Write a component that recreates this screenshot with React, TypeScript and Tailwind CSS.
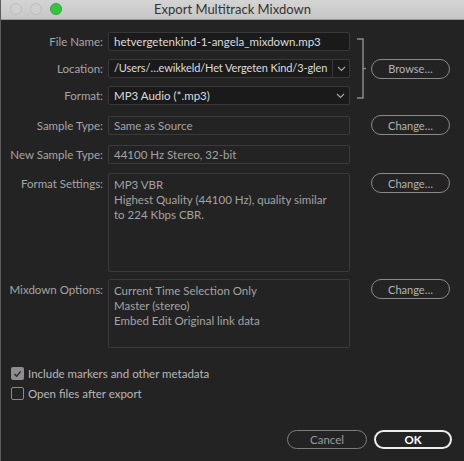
import React from 'react';

const font = { fontFamily: 'Lato, "Noto Sans", sans-serif' };

function Chevron() {
  return (
    <svg width="9" height="6" viewBox="0 0 9 6" className="shrink-0">
      <path d="M1 1 L4.5 4.5 L8 1" fill="none" stroke="#a8a8a8" strokeWidth="1.1" />
    </svg>
  );
}

function PillButton({ children }: { children: React.ReactNode }) {
  return (
    <button className="w-[79px] h-[20px] rounded-full border-[1.5px] border-[#8a8a8a] text-[11px] text-[#b4b4b4] flex items-center justify-center leading-none">
      {children}
    </button>
  );
}

function Label({ children, top }: { children: React.ReactNode; top?: boolean }) {
  return (
    <div className={`w-[102px] shrink-0 text-right text-[11.5px] leading-[15px] text-[#a6a6a6] ${top ? 'pt-[3px]' : ''}`}>
      {children}
    </div>
  );
}

function ReadOnly({ children, h }: { children: React.ReactNode; h: string }) {
  return (
    <div className={`w-[242px] ${h} rounded-[2px] border border-[#3a3a3a] px-[5px] text-[11.5px] text-[#a3a3a3] leading-[15px] pt-[1px]`}>
      {children}
    </div>
  );
}

export default function App() {
  return (
    <div className="w-[464px] h-[461px] bg-[#232323] overflow-hidden flex flex-col border-l border-[#5c5c5c]" style={font}>
      {/* Title bar */}
      <div className="relative h-[20px] shrink-0 bg-gradient-to-b from-[#d4d4d4] to-[#c6c6c6] border-b border-[#9a9a9a] flex items-center justify-center">
        <div className="absolute left-[9px] top-[3px] flex gap-[8px]">
          <span className="w-[12px] h-[12px] rounded-full bg-[#d0d0d0] border border-[#bdbdbd]" />
          <span className="w-[12px] h-[12px] rounded-full bg-[#d0d0d0] border border-[#bdbdbd]" />
          <span className="w-[12px] h-[12px] rounded-full bg-[#35c43f] border border-[#2ea836]" />
        </div>
        <span className="text-[13px] text-[#333333]">Export Multitrack Mixdown</span>
      </div>

      <div className="flex flex-col pt-[12px]">
        {/* File group */}
        <div className="flex items-center">
          <div className="flex flex-col gap-[8px]">
            <div className="flex items-center gap-[5px]">
              <Label>File Name:</Label>
              <div className="w-[242px] h-[19px] rounded-[2px] bg-[#1a1a1a] border border-[#383838] px-[5px] text-[11.5px] text-[#dcdcdc] flex items-center">
                hetvergetenkind-1-angela_mixdown.mp3
              </div>
            </div>
            <div className="flex items-center gap-[5px]">
              <Label>Location:</Label>
              <div className="w-[242px] h-[19px] rounded-[2px] bg-[#1a1a1a] border border-[#383838] text-[11px] text-[#dcdcdc] flex items-center">
                <span className="flex-1 overflow-hidden whitespace-nowrap pl-[5px] tracking-[-0.1px]">/Users/…ewikkeld/Het Vergeten Kind/3-glen</span>
                <span className="w-[17px] h-full border-l border-[#383838] flex items-center justify-center">
                  <Chevron />
                </span>
              </div>
            </div>
            <div className="flex items-center gap-[5px]">
              <Label>Format:</Label>
              <div className="w-[242px] h-[19px] rounded-[2px] bg-[#1a1a1a] border border-[#383838] text-[11.5px] text-[#dcdcdc] flex items-center">
                <span className="flex-1 pl-[5px]">MP3 Audio (*.mp3)</span>
                <span className="w-[17px] flex items-center justify-center">
                  <Chevron />
                </span>
              </div>
            </div>
          </div>
          <svg width="21" height="61" viewBox="0 0 21 61" className="shrink-0">
            <path d="M7 1 H13 V60 H7 M13 30.5 H16" fill="none" stroke="#8a8a8a" strokeWidth="1.5" />
          </svg>
          <PillButton>Browse…</PillButton>
        </div>

        <div className="flex items-center mt-[10px]">
          <div className="flex items-center gap-[5px]">
            <Label>Sample Type:</Label>
            <ReadOnly h="h-[19px]">Same as Source</ReadOnly>
          </div>
          <div className="w-[21px]" />
          <PillButton>Change…</PillButton>
        </div>

        <div className="flex items-center mt-[10px]">
          <div className="flex items-center gap-[5px]">
            <Label>New Sample Type:</Label>
            <ReadOnly h="h-[19px]">44100 Hz Stereo, 32-bit</ReadOnly>
          </div>
        </div>

        <div className="flex items-start mt-[9px]">
          <div className="flex items-start gap-[5px]">
            <Label top>Format Settings:</Label>
            <ReadOnly h="h-[99px]">
              <div className="pt-[2px]">MP3 VBR</div>
              <div>Highest Quality (44100 Hz), quality similar</div>
              <div>to 224 Kbps CBR.</div>
            </ReadOnly>
          </div>
          <div className="w-[21px]" />
          <PillButton>Change…</PillButton>
        </div>

        <div className="flex items-start mt-[7px]">
          <div className="flex items-start gap-[5px]">
            <Label top>Mixdown Options:</Label>
            <ReadOnly h="h-[69px]">
              <div className="pt-[2px]">Current Time Selection Only</div>
              <div>Master (stereo)</div>
              <div>Embed Edit Original link data</div>
            </ReadOnly>
          </div>
          <div className="w-[21px]" />
          <PillButton>Change…</PillButton>
        </div>

        {/* Checkboxes */}
        <div className="flex flex-col gap-[7px] mt-[19px] pl-[10px]">
          <div className="flex items-center gap-[4px] h-[13px]">
            <span className="w-[13px] h-[13px] rounded-[2px] bg-[#8e8e8e] flex items-center justify-center">
              <svg width="9" height="8" viewBox="0 0 10 9">
                <path d="M1.5 4.5 L4 7 L8.5 1.5" fill="none" stroke="#2a2a2a" strokeWidth="1.6" />
              </svg>
            </span>
            <span className="text-[11.5px] leading-[13px] text-[#b8b8b8]">Include markers and other metadata</span>
          </div>
          <div className="flex items-center gap-[4px] h-[13px]">
            <span className="w-[13px] h-[13px] rounded-[2px] border border-[#8a8a8a]" />
            <span className="text-[11.5px] leading-[13px] text-[#b8b8b8]">Open files after export</span>
          </div>
        </div>

        {/* Footer buttons */}
        <div className="flex justify-end gap-[7px] mt-[30px] pr-[12px]">
          <button className="w-[80px] h-[19px] rounded-full border-[1.5px] border-[#7c7c7c] text-[11.5px] text-[#9c9c9c] flex items-center justify-center">
            Cancel
          </button>
          <button className="w-[78px] h-[19px] rounded-full border-2 border-[#ececec] text-[11.5px] font-bold text-white flex items-center justify-center">
            OK
          </button>
        </div>
      </div>
    </div>
  );
}
